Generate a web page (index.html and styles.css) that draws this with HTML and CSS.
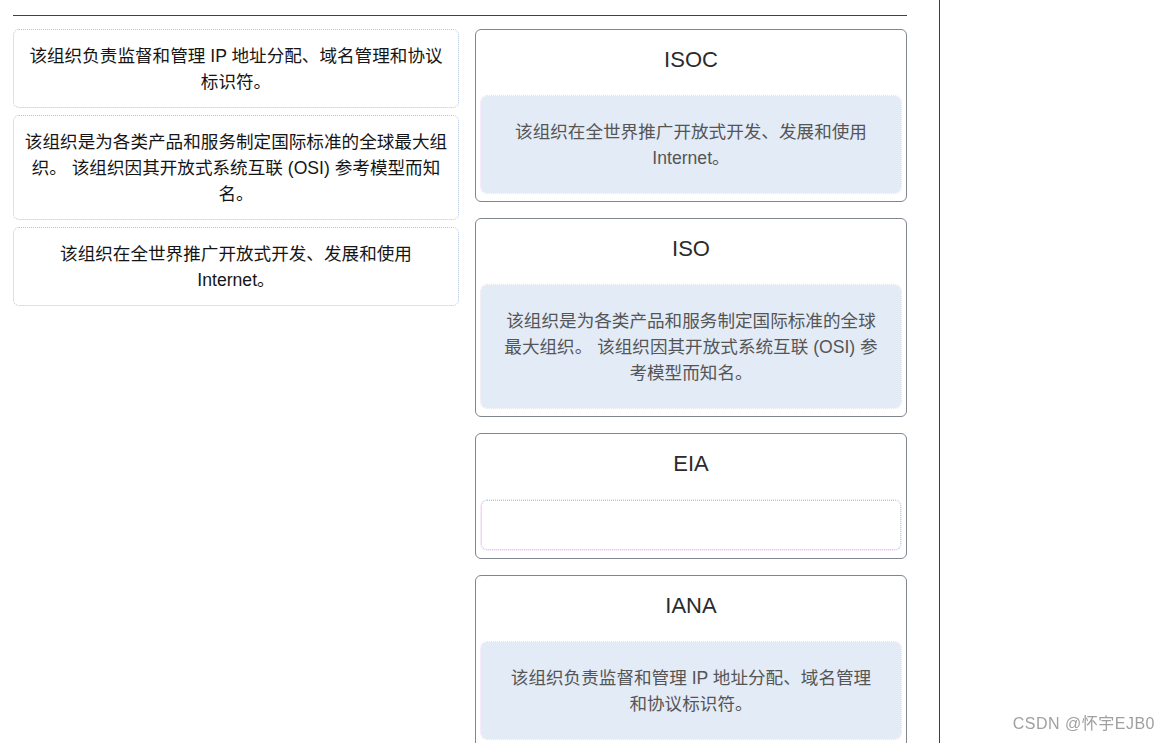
FILE: index.html
```html
<!DOCTYPE html>
<html lang="zh">
<head>
<meta charset="utf-8">
<title>拖放匹配</title>
<link rel="stylesheet" href="styles.css">
</head>
<body>
<div class="page">
  <main class="main">
    <div class="board">
      <div class="sources">
        <div class="source">该组织负责监督和管理 IP 地址分配、域名管理和协议标识符。</div>
        <div class="source">该组织是为各类产品和服务制定国际标准的全球最大组织。 该组织因其开放式系统互联 (OSI) 参考模型而知名。</div>
        <div class="source">该组织在全世界推广开放式开发、发展和使用 Internet。</div>
      </div>
      <div class="targets">
        <div class="target">
          <div class="title">ISOC</div>
          <div class="slot"><div class="answer">该组织在全世界推广开放式开发、发展和使用 Internet。</div></div>
        </div>
        <div class="target">
          <div class="title">ISO</div>
          <div class="slot"><div class="answer">该组织是为各类产品和服务制定国际标准的全球最大组织。 该组织因其开放式系统互联 (OSI) 参考模型而知名。</div></div>
        </div>
        <div class="target">
          <div class="title">EIA</div>
          <div class="slot"><div class="empty"></div></div>
        </div>
        <div class="target">
          <div class="title">IANA</div>
          <div class="slot"><div class="answer">该组织负责监督和管理 IP 地址分配、域名管理和协议标识符。</div></div>
        </div>
      </div>
    </div>
  </main>
  <aside class="side"></aside>
</div>
<div class="watermark">CSDN @怀宇EJB0</div>
</body>
</html>
```
FILE: styles.css
```css
html, body {
  margin: 0;
  padding: 0;
  background: #ffffff;
}

body {
  font-family: "Liberation Sans", "Noto Sans CJK SC", sans-serif;
  font-size: 17.6px;
  color: #111;
  overflow: hidden;
  height: 743px;
}

.page {
  display: flex;
  height: 743px;
}

.main {
  width: 894px;
  padding: 0 32px 0 13px;
  border-right: 1px solid #5a2474;
  flex: none;
}

.side {
  flex: 1;
}

.board {
  margin-top: 15px;
  border-top: 1px solid #4a3a55;
  padding-top: 13px;
  display: grid;
  grid-template-columns: 446px 432px;
  column-gap: 16px;
  align-items: start;
}

.sources {
  display: flex;
  flex-direction: column;
  gap: 7px;
}

.source {
  border: 1px dotted #b3c3da;
  border-radius: 6px;
  padding: 12.5px 10px;
  text-align: center;
  line-height: 26px;
  color: #151515;
}

.targets {
  display: flex;
  flex-direction: column;
  gap: 16px;
}

.target {
  border: 1px solid #80868e;
  border-radius: 6px;
  padding: 0 5px 8px;
}

.title {
  text-align: center;
  font-size: 22px;
  line-height: 32px;
  padding: 14px 0 20px;
  color: #2b2b2b;
}

.slot {
  border-radius: 6px;
  outline: 1px dotted #f0dcf2;
}

.answer {
  background: #e3ebf7;
  border-radius: 6px;
  padding: 22.5px 22.5px;
  text-align: center;
  line-height: 26px;
  color: #555;
}

.empty {
  height: 48px;
  border: 1px dotted #b9c6dc;
  border-radius: 6px;
}

.watermark {
  position: fixed;
  right: 16px;
  bottom: 9px;
  font-size: 16px;
  color: #a0a0a0;
  letter-spacing: 0.5px;
}
```
